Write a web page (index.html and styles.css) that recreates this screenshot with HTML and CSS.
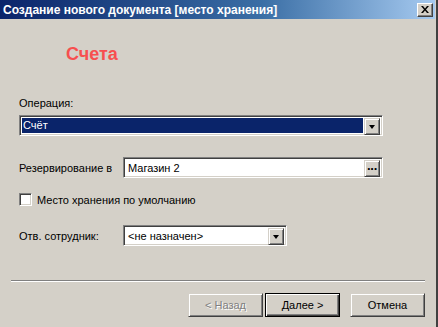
FILE: index.html
```html
<!DOCTYPE html>
<html lang="ru">
<head>
  <meta charset="UTF-8">
  <title>Создание нового документа [место хранения]</title>
  <link rel="stylesheet" href="styles.css">
</head>
<body>
  <div class="window">
    <div class="titlebar">
      <span class="title">Создание нового документа [место хранения]</span>
      <button class="close-btn" aria-label="Закрыть">
        <svg width="8" height="7" viewBox="0 0 8 7"><path d="M0 0h2l2 2.5L6 0h2L5 3.5 8 7H6L4 4.5 2 7H0l3-3.5z" fill="#000"/></svg>
      </button>
    </div>

    <div class="content">
      <div class="page-title">Счета</div>

      <div class="label op-label">Операция:</div>
      <div class="field combo wide">
        <div class="combo-value selected"><span>Счёт</span></div>
        <div class="raised drop-btn"><span class="arrow"></span></div>
      </div>

      <div class="row reserve-row">
        <span class="label row-label">Резервирование в</span>
        <div class="field combo long">
          <div class="combo-value"><span>Магазин 2</span></div>
          <div class="raised drop-btn dots">···</div>
        </div>
      </div>

      <label class="row check-row">
        <span class="checkbox"></span>
        <span class="label">Место хранения по умолчанию</span>
      </label>

      <div class="row emp-row">
        <span class="label row-label">Отв. сотрудник:</span>
        <div class="field combo short">
          <div class="combo-value"><span>&lt;не назначен&gt;</span></div>
          <div class="raised drop-btn"><span class="arrow"></span></div>
        </div>
      </div>
    </div>

    <div class="separator"></div>

    <div class="buttons">
      <button class="raised button disabled">&lt; Назад</button>
      <button class="raised button default">Далее &gt;</button>
      <button class="raised button cancel">Отмена</button>
    </div>
  </div>
</body>
</html>
```

FILE: styles.css
```css
:root {
  --face: #d4d0c8;
  --shadow: #808080;
  --dark: #404040;
  --light: #ffffff;
  --select: #0a246a;
}

body {
  margin: 0;
  background: var(--face);
  font-family: "Liberation Sans", Arial, sans-serif;
  font-size: 11px;
  color: #000;
}

.window {
  width: 436px;
  height: 327px;
  border-right: 2px solid #404040;
  background: var(--face);
  display: flex;
  flex-direction: column;
}

.titlebar {
  height: 19px;
  display: flex;
  align-items: center;
  justify-content: space-between;
  padding-left: 3px;
  background: linear-gradient(to right, #0a246a 0%, #3a6ea5 60%, #a6caf0 100%);
  border-right: 1px solid var(--face);
}

.title {
  color: #fff;
  font-weight: bold;
  font-size: 12px;
}

.close-btn {
  width: 16px;
  height: 14px;
  margin-right: 2px;
  padding: 0;
  background: var(--face);
  border: 1px solid;
  border-color: var(--light) var(--dark) var(--dark) var(--light);
  box-shadow: inset -1px -1px var(--shadow);
  display: flex;
  align-items: center;
  justify-content: center;
}

.content {
  padding-left: 19px;
  display: flex;
  flex-direction: column;
}

.page-title {
  margin-top: 23px;
  padding-left: 47px;
  height: 22px;
  line-height: 24px;
  color: #f74f4f;
  font-weight: bold;
  font-size: 18px;
}

.label {
  line-height: 14px;
  white-space: nowrap;
}

.op-label {
  margin-top: 32px;
}

.field {
  height: 21px;
  box-sizing: border-box;
  border: 1px solid;
  border-color: var(--shadow) var(--light) var(--light) var(--shadow);
  box-shadow: inset 1px 1px var(--dark), inset -1px -1px var(--face);
  background: #fff;
  display: flex;
  padding: 2px;
}

.combo.wide {
  width: 364px;
  margin-top: 5px;
}

.combo.long {
  width: 260px;
}

.combo.short {
  width: 164px;
}

.combo-value {
  flex: 1;
  display: flex;
  align-items: center;
  padding: 1px;
}

.combo-value span {
  padding-left: 1px;
  line-height: 14px;
}

.combo-value.selected {
  padding: 0 1px 0 0;
}

.combo-value.selected span {
  flex: 1;
  background: var(--select);
  color: #fff;
  height: 15px;
  line-height: 15px;
}

.raised {
  background: var(--face);
  border: 1px solid;
  border-color: var(--face) var(--dark) var(--dark) var(--face);
  box-shadow: inset 1px 1px var(--light), inset -1px -1px var(--shadow);
  box-sizing: border-box;
}

.drop-btn {
  width: 16px;
  height: 17px;
  display: flex;
  align-items: center;
  justify-content: center;
}

.arrow {
  width: 0;
  height: 0;
  border-left: 3.5px solid transparent;
  border-right: 3.5px solid transparent;
  border-top: 4px solid #000;
  margin-top: 1px;
}

.dots {
  font-weight: bold;
  font-size: 13px;
  letter-spacing: -1px;
  line-height: 13px;
}

.row {
  display: flex;
  align-items: center;
}

.row-label {
  width: 104px;
}

.reserve-row {
  margin-top: 21px;
}

.check-row {
  margin-top: 15px;
  gap: 5px;
  height: 13px;
}

.checkbox {
  width: 13px;
  height: 13px;
  box-sizing: border-box;
  background: #fff;
  border: 1px solid;
  border-color: var(--shadow) var(--light) var(--light) var(--shadow);
  box-shadow: inset 1px 1px var(--dark), inset -1px -1px var(--face);
}

.emp-row {
  margin-top: 19px;
}

.separator {
  margin: 34px 11px 0 11px;
  border-top: 1px solid var(--shadow);
  border-bottom: 1px solid var(--light);
  height: 0;
}

.buttons {
  display: flex;
  justify-content: flex-end;
  padding-right: 11px;
  margin-top: 11px;
}

.button {
  width: 75px;
  height: 24px;
  font-family: inherit;
  font-size: 11px;
  padding: 0;
  color: #000;
}

.button.disabled {
  color: var(--shadow);
  text-shadow: 1px 1px var(--light);
}

.button.default {
  margin-left: 2px;
  border-color: #000;
  box-shadow: inset 1px 1px var(--light), inset -1px -1px var(--dark), inset -2px -2px var(--shadow);
}

.button.cancel {
  margin-left: 10px;
}
```
